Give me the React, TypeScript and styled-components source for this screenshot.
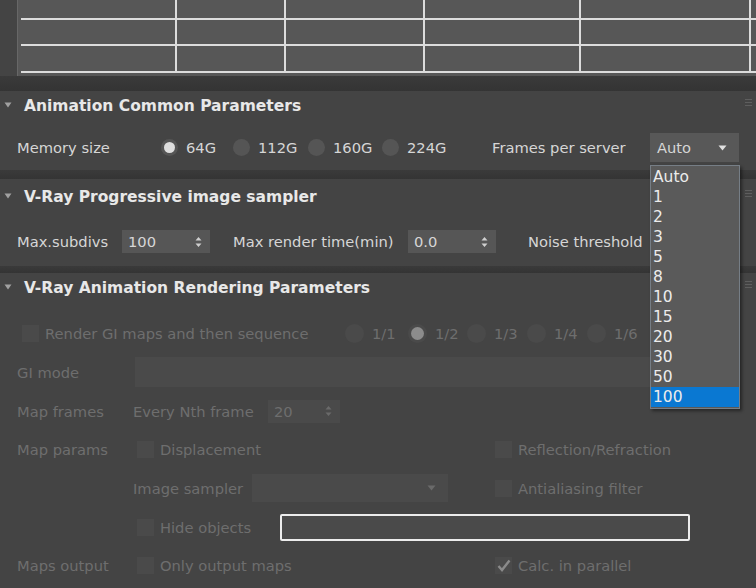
import React from 'react';
import styled, { createGlobalStyle, css } from 'styled-components';

const GlobalStyle = createGlobalStyle`
  html, body {
    margin: 0;
    padding: 0;
    background: #444444;
  }
  body {
    font-family: "DejaVu Sans", "Liberation Sans", sans-serif;
    font-size: 14.7px;
    color: #d6d6d6;
  }
`;

const Page = styled.div`
  position: relative;
  width: 756px;
  height: 588px;
  overflow: hidden;
  background: #444444;
`;

/* ---------- top list table ---------- */

const TableArea = styled.div`
  padding-left: 17px;
`;

const TableBox = styled.div`
  background: #575757;
  border-left: 1px solid #676767;
  padding: 0 0 3px 3px;
`;

const Grid = styled.div`
  display: grid;
  grid-template-columns: 154px 107px 137px 154px 168px 1fr;
  grid-template-rows: 18px 24px 25px;
  gap: 2px;
  padding-bottom: 2px;
  background: #dcdcdc;
`;

const GridCell = styled.div`
  background: #575757;
`;

const Band = styled.div<{ $h: number }>`
  height: ${(p) => p.$h}px;
  background: linear-gradient(#3a3a3a, #343434);
`;

/* ---------- rollouts ---------- */

const Rollout = styled.section<{ $pt?: number }>`
  padding-top: ${(p) => p.$pt ?? 0}px;
`;

const RolloutHeader = styled.div`
  display: flex;
  align-items: center;
  height: 30px;
  padding-left: 4px;
`;

const Title = styled.h2`
  margin: 0 0 0 12px;
  font-size: 15.5px;
  font-weight: bold;
  color: #e8e8e8;
`;

const Grip = styled.div`
  margin-left: auto;
  margin-right: 4px;
  align-self: flex-start;
  margin-top: 8px;
  display: flex;
  flex-direction: column;
  gap: 2px;
  span {
    display: block;
    width: 7px;
    height: 1px;
    background: #5e5e5e;
  }
`;

const Body = styled.div<{ $pt: number; $pb: number }>`
  padding: ${(p) => p.$pt}px 0 ${(p) => p.$pb}px;
`;

const Row = styled.div<{ $pl?: number; $h?: number }>`
  display: flex;
  align-items: center;
  height: ${(p) => p.$h ?? 39}px;
  padding-left: ${(p) => p.$pl ?? 17}px;
`;

const Cell = styled.div<{ $w?: number }>`
  display: flex;
  align-items: center;
  flex: none;
  ${(p) =>
    p.$w
      ? css`
          width: ${p.$w}px;
        `
      : css`
          flex: 1;
        `}
`;

const Label = styled.span<{ $dim?: boolean }>`
  white-space: nowrap;
  color: ${(p) => (p.$dim ? '#6e6e6e' : '#d6d6d6')};
`;

const RadioDot = styled.span<{ $on?: boolean; $dim?: boolean; $size?: number }>`
  position: relative;
  flex: none;
  width: ${(p) => p.$size ?? 17}px;
  height: ${(p) => p.$size ?? 17}px;
  border-radius: 50%;
  margin-right: 8px;
  background: ${(p) => (p.$dim ? '#4a4a4a' : '#555555')};
  ${(p) =>
    p.$on &&
    css`
      &::after {
        content: '';
        position: absolute;
        inset: 3px;
        border-radius: 50%;
        background: ${p.$dim ? '#8c8c8c' : '#dedede'};
      }
    `}
`;

const CheckBox = styled.span<{ $dim?: boolean }>`
  flex: none;
  display: flex;
  align-items: center;
  justify-content: center;
  width: 17px;
  height: 17px;
  margin-right: 6px;
  background: ${(p) => (p.$dim ? '#4a4a4a' : '#555555')};
`;

const Spinner = styled.div<{ $w: number; $dim?: boolean }>`
  display: flex;
  align-items: center;
  justify-content: space-between;
  width: ${(p) => p.$w}px;
  height: 23px;
  box-sizing: border-box;
  padding: 0 8px 0 6px;
  background: ${(p) => (p.$dim ? '#4a4a4a' : '#565656')};
  color: ${(p) => (p.$dim ? '#6e6e6e' : '#d6d6d6')};
`;

const Combo = styled.div<{ $w: number; $h: number; $dim?: boolean }>`
  display: flex;
  align-items: center;
  justify-content: space-between;
  width: ${(p) => p.$w}px;
  height: ${(p) => p.$h}px;
  box-sizing: border-box;
  padding: 0 12px 0 7px;
  background: ${(p) => (p.$dim ? '#4a4a4a' : '#585858')};
  color: #d6d6d6;
`;

const FieldBar = styled.div`
  width: 605px;
  height: 30px;
  background: #4a4a4a;
`;

const OutlineBox = styled.div`
  width: 410px;
  height: 27px;
  box-sizing: border-box;
  border: 2px solid #ececec;
  border-radius: 2px;
  background: #4a4a4a;
`;

/* ---------- dropdown list ---------- */

const DropList = styled.ul`
  position: absolute;
  left: 650px;
  top: 165px;
  width: 90px;
  margin: 0;
  padding: 1px 0;
  list-style: none;
  box-sizing: border-box;
  background: #5a5a5a;
  border: 1px solid #767e86;
  box-shadow: 2px 2px 3px rgba(0, 0, 0, 0.45);
`;

const DropItem = styled.li<{ $sel?: boolean }>`
  height: 20px;
  line-height: 20px;
  padding-left: 2px;
  font-size: 15.5px;
  color: #ececec;
  background: ${(p) => (p.$sel ? '#0a78d2' : 'transparent')};
`;

/* ---------- drawings ---------- */

const Triangle = () => (
  <svg width="8" height="6" viewBox="0 0 8 6" style={{ marginTop: -3 }}>
    <path d="M0.5 0.5 L7.5 0.5 L4 5.5 Z" fill="#a0a0a0" />
  </svg>
);

const SpinArrows = ({ dim }: { dim?: boolean }) => (
  <svg width="7" height="12" viewBox="0 0 7 12">
    <path d="M0.5 4.5 L3.5 1 L6.5 4.5 Z M0.5 7.5 L6.5 7.5 L3.5 11 Z" fill={dim ? '#6a6a6a' : '#cfcfcf'} />
  </svg>
);

const DownArrow = ({ dim }: { dim?: boolean }) => (
  <svg width="9" height="6" viewBox="0 0 9 6">
    <path d="M0.5 0.5 L8.5 0.5 L4.5 5.5 Z" fill={dim ? '#6a6a6a' : '#e0e0e0'} />
  </svg>
);

const Tick = () => (
  <svg width="14" height="13" viewBox="0 0 14 13">
    <path d="M1.5 7 L5 11 L12.5 1.5" fill="none" stroke="#8a8a8a" strokeWidth="2.4" />
  </svg>
);

const RolloutTitle = ({ children }: { children: React.ReactNode }) => (
  <RolloutHeader>
    <Triangle />
    <Title>{children}</Title>
    <Grip>
      <span />
      <span />
      <span />
    </Grip>
  </RolloutHeader>
);

const memory = [
  { text: '64G', w: 72, on: true },
  { text: '112G', w: 75 },
  { text: '160G', w: 74 },
  { text: '224G', w: 110 },
];

const giRatios = [
  { text: '1/1', w: 63 },
  { text: '1/2', w: 59, on: true },
  { text: '1/3', w: 60 },
  { text: '1/4', w: 60 },
  { text: '1/6', w: 60 },
];

const frameOptions = ['Auto', '1', '2', '3', '5', '8', '10', '15', '20', '30', '50', '100'];

const ROW3 = 38.67;

export default function App() {
  return (
    <Page>
      <GlobalStyle />

      <TableArea>
        <TableBox>
          <Grid>
            {Array.from({ length: 18 }).map((_, i) => (
              <GridCell key={i} />
            ))}
          </Grid>
        </TableBox>
      </TableArea>
      <Band $h={15} />

      <Rollout>
        <RolloutTitle>Animation Common Parameters</RolloutTitle>
        <Body $pt={7} $pb={3}>
          <Row>
            <Cell $w={144}>
              <Label>Memory size</Label>
            </Cell>
            {memory.map((m) => (
              <Cell key={m.text} $w={m.w}>
                <RadioDot $on={m.on} />
                <Label>{m.text}</Label>
              </Cell>
            ))}
            <Cell $w={158}>
              <Label>Frames per server</Label>
            </Cell>
            <Combo $w={89} $h={29}>
              <span>Auto</span>
              <DownArrow />
            </Combo>
          </Row>
        </Body>
      </Rollout>
      <Band $h={9} />

      <Rollout $pt={3}>
        <RolloutTitle>V-Ray Progressive image sampler</RolloutTitle>
        <Body $pt={10} $pb={5}>
          <Row>
            <Cell $w={105}>
              <Label>Max.subdivs</Label>
            </Cell>
            <Cell $w={111}>
              <Spinner $w={88}>
                <span>100</span>
                <SpinArrows />
              </Spinner>
            </Cell>
            <Cell $w={175}>
              <Label>Max render time(min)</Label>
            </Cell>
            <Cell $w={120}>
              <Spinner $w={88}>
                <span>0.0</span>
                <SpinArrows />
              </Spinner>
            </Cell>
            <Cell>
              <Label>Noise threshold</Label>
            </Cell>
          </Row>
        </Body>
      </Rollout>
      <Band $h={7} />

      <Rollout>
        <RolloutTitle>V-Ray Animation Rendering Parameters</RolloutTitle>
        <Body $pt={11.5} $pb={0}>
          <Row $pl={22} $h={ROW3}>
            <Cell $w={323}>
              <CheckBox $dim />
              <Label $dim>Render GI maps and then sequence</Label>
            </Cell>
            {giRatios.map((r) => (
              <Cell key={r.text} $w={r.w}>
                <RadioDot $dim $on={r.on} $size={19} />
                <Label $dim>{r.text}</Label>
              </Cell>
            ))}
          </Row>

          <Row $h={ROW3}>
            <Cell $w={118}>
              <Label $dim>GI mode</Label>
            </Cell>
            <FieldBar />
          </Row>

          <Row $h={ROW3}>
            <Cell $w={116}>
              <Label $dim>Map frames</Label>
            </Cell>
            <Cell $w={135}>
              <Label $dim>Every Nth frame</Label>
            </Cell>
            <Spinner $w={72} $dim>
              <span>20</span>
              <SpinArrows dim />
            </Spinner>
          </Row>

          <Row $h={ROW3}>
            <Cell $w={120}>
              <Label $dim>Map params</Label>
            </Cell>
            <Cell $w={358}>
              <CheckBox $dim />
              <Label $dim>Displacement</Label>
            </Cell>
            <Cell>
              <CheckBox $dim />
              <Label $dim>Reflection/Refraction</Label>
            </Cell>
          </Row>

          <Row $h={ROW3}>
            <Cell $w={116} />
            <Cell $w={119}>
              <Label $dim>Image sampler</Label>
            </Cell>
            <Cell $w={243}>
              <Combo $w={196} $h={28} $dim>
                <span />
                <DownArrow dim />
              </Combo>
            </Cell>
            <Cell>
              <CheckBox $dim />
              <Label $dim>Antialiasing filter</Label>
            </Cell>
          </Row>

          <Row $h={ROW3}>
            <Cell $w={120} />
            <Cell $w={143}>
              <CheckBox $dim />
              <Label $dim>Hide objects</Label>
            </Cell>
            <OutlineBox />
          </Row>

          <Row $h={ROW3}>
            <Cell $w={120}>
              <Label $dim>Maps output</Label>
            </Cell>
            <Cell $w={358}>
              <CheckBox $dim />
              <Label $dim>Only output maps</Label>
            </Cell>
            <Cell>
              <CheckBox $dim>
                <Tick />
              </CheckBox>
              <Label $dim>Calc. in parallel</Label>
            </Cell>
          </Row>
        </Body>
      </Rollout>

      <DropList>
        {frameOptions.map((o) => (
          <DropItem key={o} $sel={o === '100'}>
            {o}
          </DropItem>
        ))}
      </DropList>
    </Page>
  );
}
